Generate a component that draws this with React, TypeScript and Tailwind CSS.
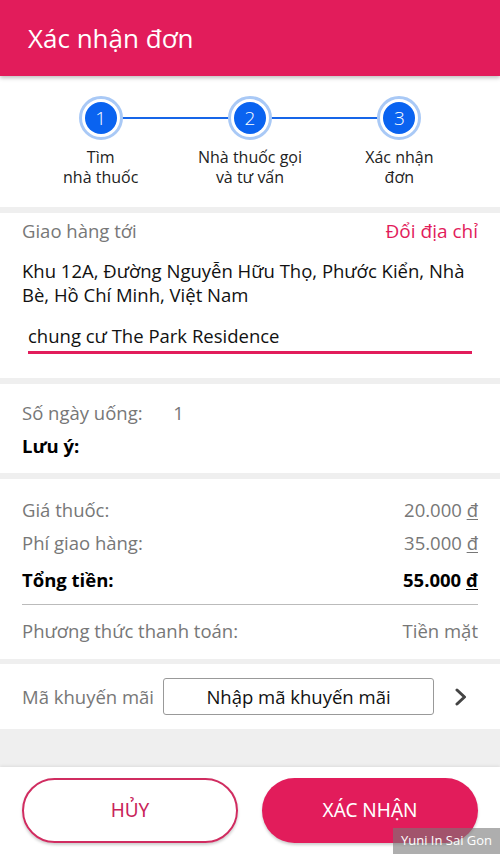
const steps = [
  { n: 1, label: ['Tìm', 'nhà thuốc'] },
  { n: 2, label: ['Nhà thuốc gọi', 'và tư vấn'] },
  { n: 3, label: ['Xác nhận', 'đơn'] },
];

function Stepper() {
  return (
    <div className="bg-white pt-5 pb-[20px] px-[26px] relative">
      {/* connector line */}
      <div className="absolute left-[110px] right-[110px] top-[41px] h-[2px] bg-[#1766e8]" />
      <div className="grid grid-cols-3 relative">
        {steps.map((s) => (
          <div key={s.n} className="flex flex-col items-center">
            <div className="w-[44px] h-[44px] rounded-full border-[3px] border-[#a9c9f6] bg-white flex items-center justify-center">
              <div className="w-[32px] h-[32px] rounded-full bg-[#0a63f0] text-white text-[19px] font-light flex items-center justify-center">
                {s.n}
              </div>
            </div>
            <div className="mt-[7px] text-center text-[16px] leading-[20px] text-[#222]">
              {s.label[0]}
              <br />
              {s.label[1]}
            </div>
          </div>
        ))}
      </div>
    </div>
  );
}

function PriceRow({ label, value, bold }: { label: string; value: string; bold?: boolean }) {
  return (
    <div className={`flex justify-between ${bold ? 'text-black font-bold' : 'text-[#777]'}`}>
      <span>{label}</span>
      <span>
        {value} <span className="underline underline-offset-2">đ</span>
      </span>
    </div>
  );
}

export default function App() {
  return (
    <div className="w-[500px] h-[854px] bg-[#efefef] flex flex-col overflow-hidden relative" style={{ fontFamily: '"Open Sans", "Noto Sans", sans-serif' }}>
      {/* Header */}
      <div className="h-[76px] bg-[#e21c5b] flex items-center px-[28px] shadow-[0_2px_4px_rgba(0,0,0,0.25)] relative z-10">
        <h1 className="text-white text-[26px]">Xác nhận đơn</h1>
      </div>

      <Stepper />

      {/* Address */}
      <div className="bg-white mt-[6px] px-[22px] pt-[6px] pb-[24px] text-[18.5px] leading-[24px]">
        <div className="flex justify-between">
          <span className="text-[#777]">Giao hàng tới</span>
          <span className="text-[#e21c5b] text-[19px]">Đổi địa chỉ</span>
        </div>
        <p className="mt-[16px] text-[#111]">
          Khu 12A, Đường Nguyễn Hữu Thọ, Phước Kiển, Nhà Bè, Hồ Chí Minh, Việt Nam
        </p>
        <div className="mx-[6px] mt-[17px] border-b-[3px] border-[#e21c5b] pb-[3px] text-[#111]">
          chung cư The Park Residence
        </div>
      </div>

      {/* Days / notes */}
      <div className="bg-white mt-[6px] px-[22px] pt-[17px] pb-[15px] text-[18.5px] leading-[24px]">
        <div className="text-[#777]">
          Số ngày uống: <span className="ml-[26px]">1</span>
        </div>
        <div className="mt-[9px] font-bold text-black">Lưu ý:</div>
      </div>

      {/* Prices */}
      <div className="bg-white mt-[6px] px-[22px] pt-[19px] pb-[16px] text-[18.5px] leading-[24px]">
        <div className="flex flex-col gap-[9px]">
          <PriceRow label="Giá thuốc:" value="20.000" />
          <PriceRow label="Phí giao hàng:" value="35.000" />
          <div className="mt-[4px]">
            <PriceRow label="Tổng tiền:" value="55.000" bold />
          </div>
        </div>
        <div className="h-px bg-[#bbb] mt-[12px]" />
        <div className="flex justify-between text-[#777] mt-[14px]">
          <span>Phương thức thanh toán:</span>
          <span>Tiền mặt</span>
        </div>
      </div>

      {/* Promo */}
      <div className="bg-white mt-[5px] pl-[22px] pr-[33px] h-[65px] flex items-center text-[18.5px]">
        <span className="text-[#777]">Mã khuyến mãi</span>
        <div className="ml-auto mr-[21px] w-[271px] h-[37px] border border-[#999] rounded-[3px] flex items-center justify-center text-[#111]">
          Nhập mã khuyến mãi
        </div>
        <svg width="12" height="20" viewBox="0 0 12 20" fill="none">
          <polyline points="2,3 9.5,10 2,17" stroke="#444" strokeWidth="3" strokeLinecap="round" strokeLinejoin="round" />
        </svg>
      </div>

      <div className="flex-1" />

      {/* Bottom buttons */}
      <div className="bg-white h-[87px] flex items-center justify-between px-[22px] shadow-[0_-1px_3px_rgba(0,0,0,0.08)]" style={{ fontFamily: '"Noto Sans", sans-serif' }}>
        <button className="w-[216px] h-[65px] rounded-full border-2 border-[#d02c60] text-[#c8245a] text-[19px] shadow-[0_2px_3px_rgba(0,0,0,0.2)]">
          HỦY
        </button>
        <button className="w-[216px] h-[65px] rounded-full bg-[#e21c5b] text-white text-[19px] shadow-[0_2px_3px_rgba(0,0,0,0.2)]">
          XÁC NHẬN
        </button>
      </div>

      {/* watermark */}
      <div className="absolute right-0 bottom-0 w-[107px] h-[26px] bg-[rgba(120,120,120,0.6)] text-white text-[13px] flex items-center justify-center">
        Yuni In Sai Gon
      </div>
    </div>
  );
}
